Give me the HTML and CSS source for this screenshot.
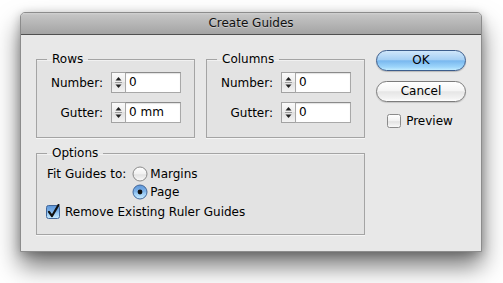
FILE: index.html
```html
<!DOCTYPE html>
<html>
<head>
<meta charset="utf-8">
<link rel="stylesheet" href="styles.css">
</head>
<body>
<svg width="0" height="0" class="defs">
  <defs>
    <linearGradient id="spinGrad" x1="0" y1="0" x2="0" y2="1">
      <stop offset="0" stop-color="#fbfbfb"/>
      <stop offset="0.5" stop-color="#ececec"/>
      <stop offset="0.5" stop-color="#e0e0e0"/>
      <stop offset="1" stop-color="#f4f4f4"/>
    </linearGradient>
    <linearGradient id="radioOff" x1="0" y1="0" x2="0" y2="1">
      <stop offset="0" stop-color="#ffffff"/>
      <stop offset="0.5" stop-color="#f1f1f1"/>
      <stop offset="0.55" stop-color="#e2e2e2"/>
      <stop offset="1" stop-color="#fbfbfb"/>
    </linearGradient>
    <linearGradient id="blueGrad" x1="0" y1="0" x2="0" y2="1">
      <stop offset="0" stop-color="#5c95d8"/>
      <stop offset="0.5" stop-color="#82b6ea"/>
      <stop offset="0.55" stop-color="#92c5f2"/>
      <stop offset="1" stop-color="#c9ecff"/>
    </linearGradient>
  </defs>
</svg>
<div class="window">
  <div class="titlebar">Create Guides</div>
  <div class="content">
    <div class="main">
      <div class="top-groups">
        <fieldset class="group num-group">
          <legend>Rows</legend>
          <span class="lbl">Number:</span>
          <div class="spin">
            <svg class="stepper" width="15" height="21" viewBox="0 0 15 21"><rect x="0.5" y="0.5" width="14" height="20" fill="url(#spinGrad)" stroke="#a2a2a2"/><path d="M4.5 8.5 L10.5 8.5 L7.5 5 Z" fill="#222"/><path d="M4 10.5 H11" stroke="#9a9a9a" stroke-width="1"/><path d="M4.5 12.5 L10.5 12.5 L7.5 16 Z" fill="#222"/></svg>
            <div class="field">0</div>
          </div>
          <span class="lbl">Gutter:</span>
          <div class="spin">
            <svg class="stepper" width="15" height="21" viewBox="0 0 15 21"><rect x="0.5" y="0.5" width="14" height="20" fill="url(#spinGrad)" stroke="#a2a2a2"/><path d="M4.5 8.5 L10.5 8.5 L7.5 5 Z" fill="#222"/><path d="M4 10.5 H11" stroke="#9a9a9a" stroke-width="1"/><path d="M4.5 12.5 L10.5 12.5 L7.5 16 Z" fill="#222"/></svg>
            <div class="field">0 mm</div>
          </div>
        </fieldset>
        <fieldset class="group num-group">
          <legend>Columns</legend>
          <span class="lbl">Number:</span>
          <div class="spin">
            <svg class="stepper" width="15" height="21" viewBox="0 0 15 21"><rect x="0.5" y="0.5" width="14" height="20" fill="url(#spinGrad)" stroke="#a2a2a2"/><path d="M4.5 8.5 L10.5 8.5 L7.5 5 Z" fill="#222"/><path d="M4 10.5 H11" stroke="#9a9a9a" stroke-width="1"/><path d="M4.5 12.5 L10.5 12.5 L7.5 16 Z" fill="#222"/></svg>
            <div class="field">0</div>
          </div>
          <span class="lbl">Gutter:</span>
          <div class="spin">
            <svg class="stepper" width="15" height="21" viewBox="0 0 15 21"><rect x="0.5" y="0.5" width="14" height="20" fill="url(#spinGrad)" stroke="#a2a2a2"/><path d="M4.5 8.5 L10.5 8.5 L7.5 5 Z" fill="#222"/><path d="M4 10.5 H11" stroke="#9a9a9a" stroke-width="1"/><path d="M4.5 12.5 L10.5 12.5 L7.5 16 Z" fill="#222"/></svg>
            <div class="field">0</div>
          </div>
        </fieldset>
      </div>
      <fieldset class="group options">
        <legend>Options</legend>
        <span class="fit-lbl">Fit Guides to:</span>
        <div class="opt">
          <svg class="radio" width="16" height="16" viewBox="0 0 16 16"><circle cx="8" cy="8" r="7" fill="url(#radioOff)" stroke="#8a8a8a"/></svg>
          <span>Margins</span>
        </div>
        <div class="opt opt-2">
          <svg class="radio" width="16" height="16" viewBox="0 0 16 16"><circle cx="8" cy="8" r="7" fill="url(#blueGrad)" stroke="#42679a"/><circle cx="8" cy="8" r="2.4" fill="#111"/></svg>
          <span>Page</span>
        </div>
        <div class="opt check-row">
          <svg class="check" width="16" height="16" viewBox="0 0 16 16"><rect x="0.5" y="1.5" width="13" height="13" rx="2" fill="url(#blueGrad)" stroke="#42679a"/><path d="M3 7.8 L6 12 L12.5 1" fill="none" stroke="#111" stroke-width="2.2" stroke-linecap="round" stroke-linejoin="round"/></svg>
          <span>Remove Existing Ruler Guides</span>
        </div>
      </fieldset>
    </div>
    <div class="buttons">
      <div class="btn btn-ok">OK</div>
      <div class="btn btn-cancel">Cancel</div>
      <div class="opt preview">
        <svg class="check" width="16" height="16" viewBox="0 0 16 16"><rect x="0.5" y="1.5" width="13" height="13" rx="2" fill="url(#radioOff)" stroke="#8a8a8a"/></svg>
        <span>Preview</span>
      </div>
    </div>
  </div>
</div>
</body>
</html>
```

FILE: styles.css
```css
* { box-sizing: border-box; }
html, body { margin: 0; background: #ffffff; }
html { height: 100%; }
body {
  min-height: 283px;
  height: 100%;
  font-family: "DejaVu Sans", "Liberation Sans", sans-serif;
  font-size: 12px;
  color: #000;
  padding: 12px 0 0 20px;
}
.defs { position: absolute; width: 0; height: 0; }

.window {
  width: 462px;
  background: #e8e8e8;
  border: 1px solid #8c8c8c;
  border-radius: 5px 5px 0 0;
  box-shadow: 0 14px 24px rgba(0,0,0,0.55), 0 2px 10px rgba(0,0,0,0.22);
}
.titlebar {
  height: 22px;
  line-height: 21px;
  text-align: center;
  font-size: 12px;
  color: #111;
  border-radius: 4px 4px 0 0;
  background: linear-gradient(#d2d2d2 0, #c4c4c4 2px, #a4a4a4 100%);
  border-bottom: 1px solid #505050;
  text-shadow: 0 1px 0 rgba(255,255,255,0.35);
}
.content {
  display: flex;
  gap: 11px;
  padding: 0 15px 16px 15px;
}
.main {
  width: 329px;
  padding-top: 17px;
  display: flex;
  flex-direction: column;
  gap: 8px;
}
.top-groups {
  display: flex;
  gap: 11px;
}
.group {
  margin: 0;
  min-width: 0;
  border: 1px solid #a4a4a4;
  background: rgba(0,0,0,0.018);
  box-shadow: 0 1px 0 rgba(255,255,255,0.6), inset 0 1px 0 rgba(255,255,255,0.5);
}
.group legend {
  padding: 0 5px;
  line-height: 14px;
  font-size: 12px;
}
.num-group {
  width: 159px;
  padding: 6px 13px 14px 10px;
  display: grid;
  grid-template-columns: 1fr 70px;
  column-gap: 8px;
  row-gap: 9px;
  align-items: center;
}
.lbl { justify-self: end; line-height: 14px; }
.spin { display: flex; height: 21px; }
.stepper { display: block; flex: none; }
.field {
  flex: 1;
  height: 21px;
  margin-left: -1px;
  background: #fff;
  border: 1px solid #a8a8a8;
  border-top-color: #8a8a8a;
  box-shadow: inset 0 1px 1px rgba(0,0,0,0.12);
  padding-left: 3px;
  line-height: 19px;
  font-size: 12px;
}

.options {
  width: 329px;
  padding: 5px 10px 13px 10px;
  display: grid;
  grid-template-columns: auto 1fr;
  grid-template-rows: 18px 18px 20px;
  column-gap: 6px;
  align-items: center;
}
.fit-lbl { line-height: 18px; }
.opt {
  display: flex;
  align-items: center;
  gap: 2px;
  height: 18px;
}
.opt-2 { grid-column: 2; }
.check-row {
  grid-column: 1 / span 2;
  align-self: end;
  margin-left: -1px;
  gap: 3px;
}
.radio, .check { display: block; flex: none; }

.buttons {
  width: 90px;
  padding-top: 15px;
  display: flex;
  flex-direction: column;
}
.btn {
  height: 21px;
  border-radius: 11px;
  text-align: center;
  line-height: 19px;
  font-size: 12px;
}
.btn-ok {
  border: 1px solid #3c5d8c;
  background: linear-gradient(#cfe6fa 0%, #a6d0f4 45%, #79b8ef 52%, #9ed6fb 85%, #c2ecff 100%);
  box-shadow: 0 1px 1px rgba(0,0,0,0.2);
}
.btn-cancel {
  margin-top: 10px;
  border: 1px solid #7c7c7c;
  background: linear-gradient(#ffffff 0%, #f5f5f5 45%, #e6e6e6 52%, #f2f2f2 85%, #ffffff 100%);
  box-shadow: 0 1px 1px rgba(0,0,0,0.15);
}
.preview {
  margin-top: 10px;
  align-self: center;
  gap: 3px;
  margin-left: -2px;
}
```
